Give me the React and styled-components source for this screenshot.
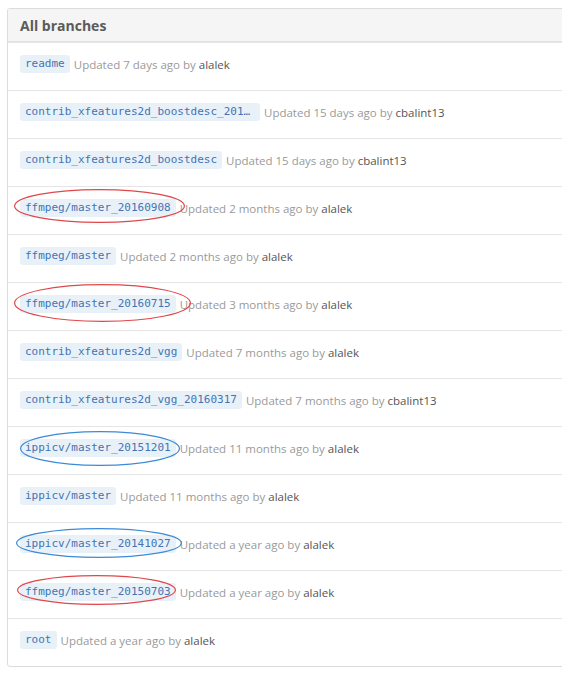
import React from 'react';
import styled, { createGlobalStyle } from 'styled-components';

const Global = createGlobalStyle`
  body {
    margin: 0;
    background: #fff;
    overflow: hidden;
    font-family: "Open Sans", "Noto Sans", "Liberation Sans", sans-serif;
  }
`;

const Page = styled.div`
  padding: 8px 0 0 7px;
`;

const Box = styled.div`
  width: 620px;
  border: 1px solid #dcdcdc;
  border-radius: 3px;
  overflow: hidden;
`;

const Header = styled.div`
  height: 32px;
  display: flex;
  align-items: center;
  padding: 0 12px;
  background: #f5f5f5;
  border-bottom: 1px solid #e2e2e2;
  font-size: 14px;
  font-weight: 700;
  color: #5b5b5b;
`;

const Row = styled.div`
  display: flex;
  align-items: center;
  gap: 4px;
  padding: 12px 12px 17px;
  border-top: 1px solid #e5e5e5;
  &:first-of-type {
    border-top: none;
    padding-top: 12px;
    padding-bottom: 14px;
  }
`;

const Label = styled.span`
  position: relative;
  display: inline-block;
  height: 18px;
  line-height: 18px;
  padding: 0 5px;
  max-width: ${(p) => p.$max || 'none'};
  box-sizing: border-box;
  background: #e9f1f8;
  border-radius: 3px;
  color: #4473b4;
  font-family: "DejaVu Sans Mono", "Liberation Mono", monospace;
  font-size: 11px;
  white-space: nowrap;
  overflow: ${(p) => (p.$max ? 'hidden' : 'visible')};
  text-overflow: ellipsis;
`;

const Meta = styled.span`
  font-size: 11.5px;
  color: #9a9a9a;
  white-space: nowrap;
`;

const Author = styled.span`
  color: #555;
`;

const Ring = styled.svg`
  position: absolute;
  pointer-events: none;
  overflow: visible;
`;

function Mark({ color, l, t, w, h }) {
  return (
    <Ring style={{ left: l, top: t, width: w, height: h }} viewBox={`0 0 ${w} ${h}`}>
      <ellipse
        cx={w / 2}
        cy={h / 2}
        rx={w / 2 - 0.6}
        ry={h / 2 - 0.6}
        fill="none"
        stroke={color}
        strokeWidth="1.2"
      />
    </Ring>
  );
}

const RED = '#e0474a';
const BLUE = '#3c8ad8';

const branches = [
  { name: 'readme', when: '7 days ago', by: 'alalek' },
  { name: 'contrib_xfeatures2d_boostdesc_20161012', when: '15 days ago', by: 'cbalint13', max: '240px' },
  { name: 'contrib_xfeatures2d_boostdesc', when: '15 days ago', by: 'cbalint13' },
  { name: 'ffmpeg/master_20160908', when: '2 months ago', by: 'alalek', mark: { color: RED, l: -6, t: -10, w: 171, h: 34 } },
  { name: 'ffmpeg/master', when: '2 months ago', by: 'alalek' },
  { name: 'ffmpeg/master_20160715', when: '3 months ago', by: 'alalek', mark: { color: RED, l: -6, t: -11, w: 177, h: 38 } },
  { name: 'contrib_xfeatures2d_vgg', when: '7 months ago', by: 'alalek' },
  { name: 'contrib_xfeatures2d_vgg_20160317', when: '7 months ago', by: 'cbalint13' },
  { name: 'ippicv/master_20151201', when: '11 months ago', by: 'alalek', mark: { color: BLUE, l: 0, t: -8, w: 160, h: 35 } },
  { name: 'ippicv/master', when: '11 months ago', by: 'alalek' },
  { name: 'ippicv/master_20141027', when: 'a year ago', by: 'alalek', mark: { color: BLUE, l: -4, t: -7, w: 166, h: 30 } },
  { name: 'ffmpeg/master_20150703', when: 'a year ago', by: 'alalek', mark: { color: RED, l: -3, t: -8, w: 159, h: 30 } },
  { name: 'root', when: 'a year ago', by: 'alalek' },
];

export default function App() {
  return (
    <Page>
      <Global />
      <Box>
        <Header>All branches</Header>
        {branches.map((b) => (
          <Row key={b.name}>
            <Label $max={b.max}>
              {b.name}
              {b.mark && <Mark {...b.mark} />}
            </Label>
            <Meta>
              Updated {b.when} by <Author>{b.by}</Author>
            </Meta>
          </Row>
        ))}
      </Box>
    </Page>
  );
}
